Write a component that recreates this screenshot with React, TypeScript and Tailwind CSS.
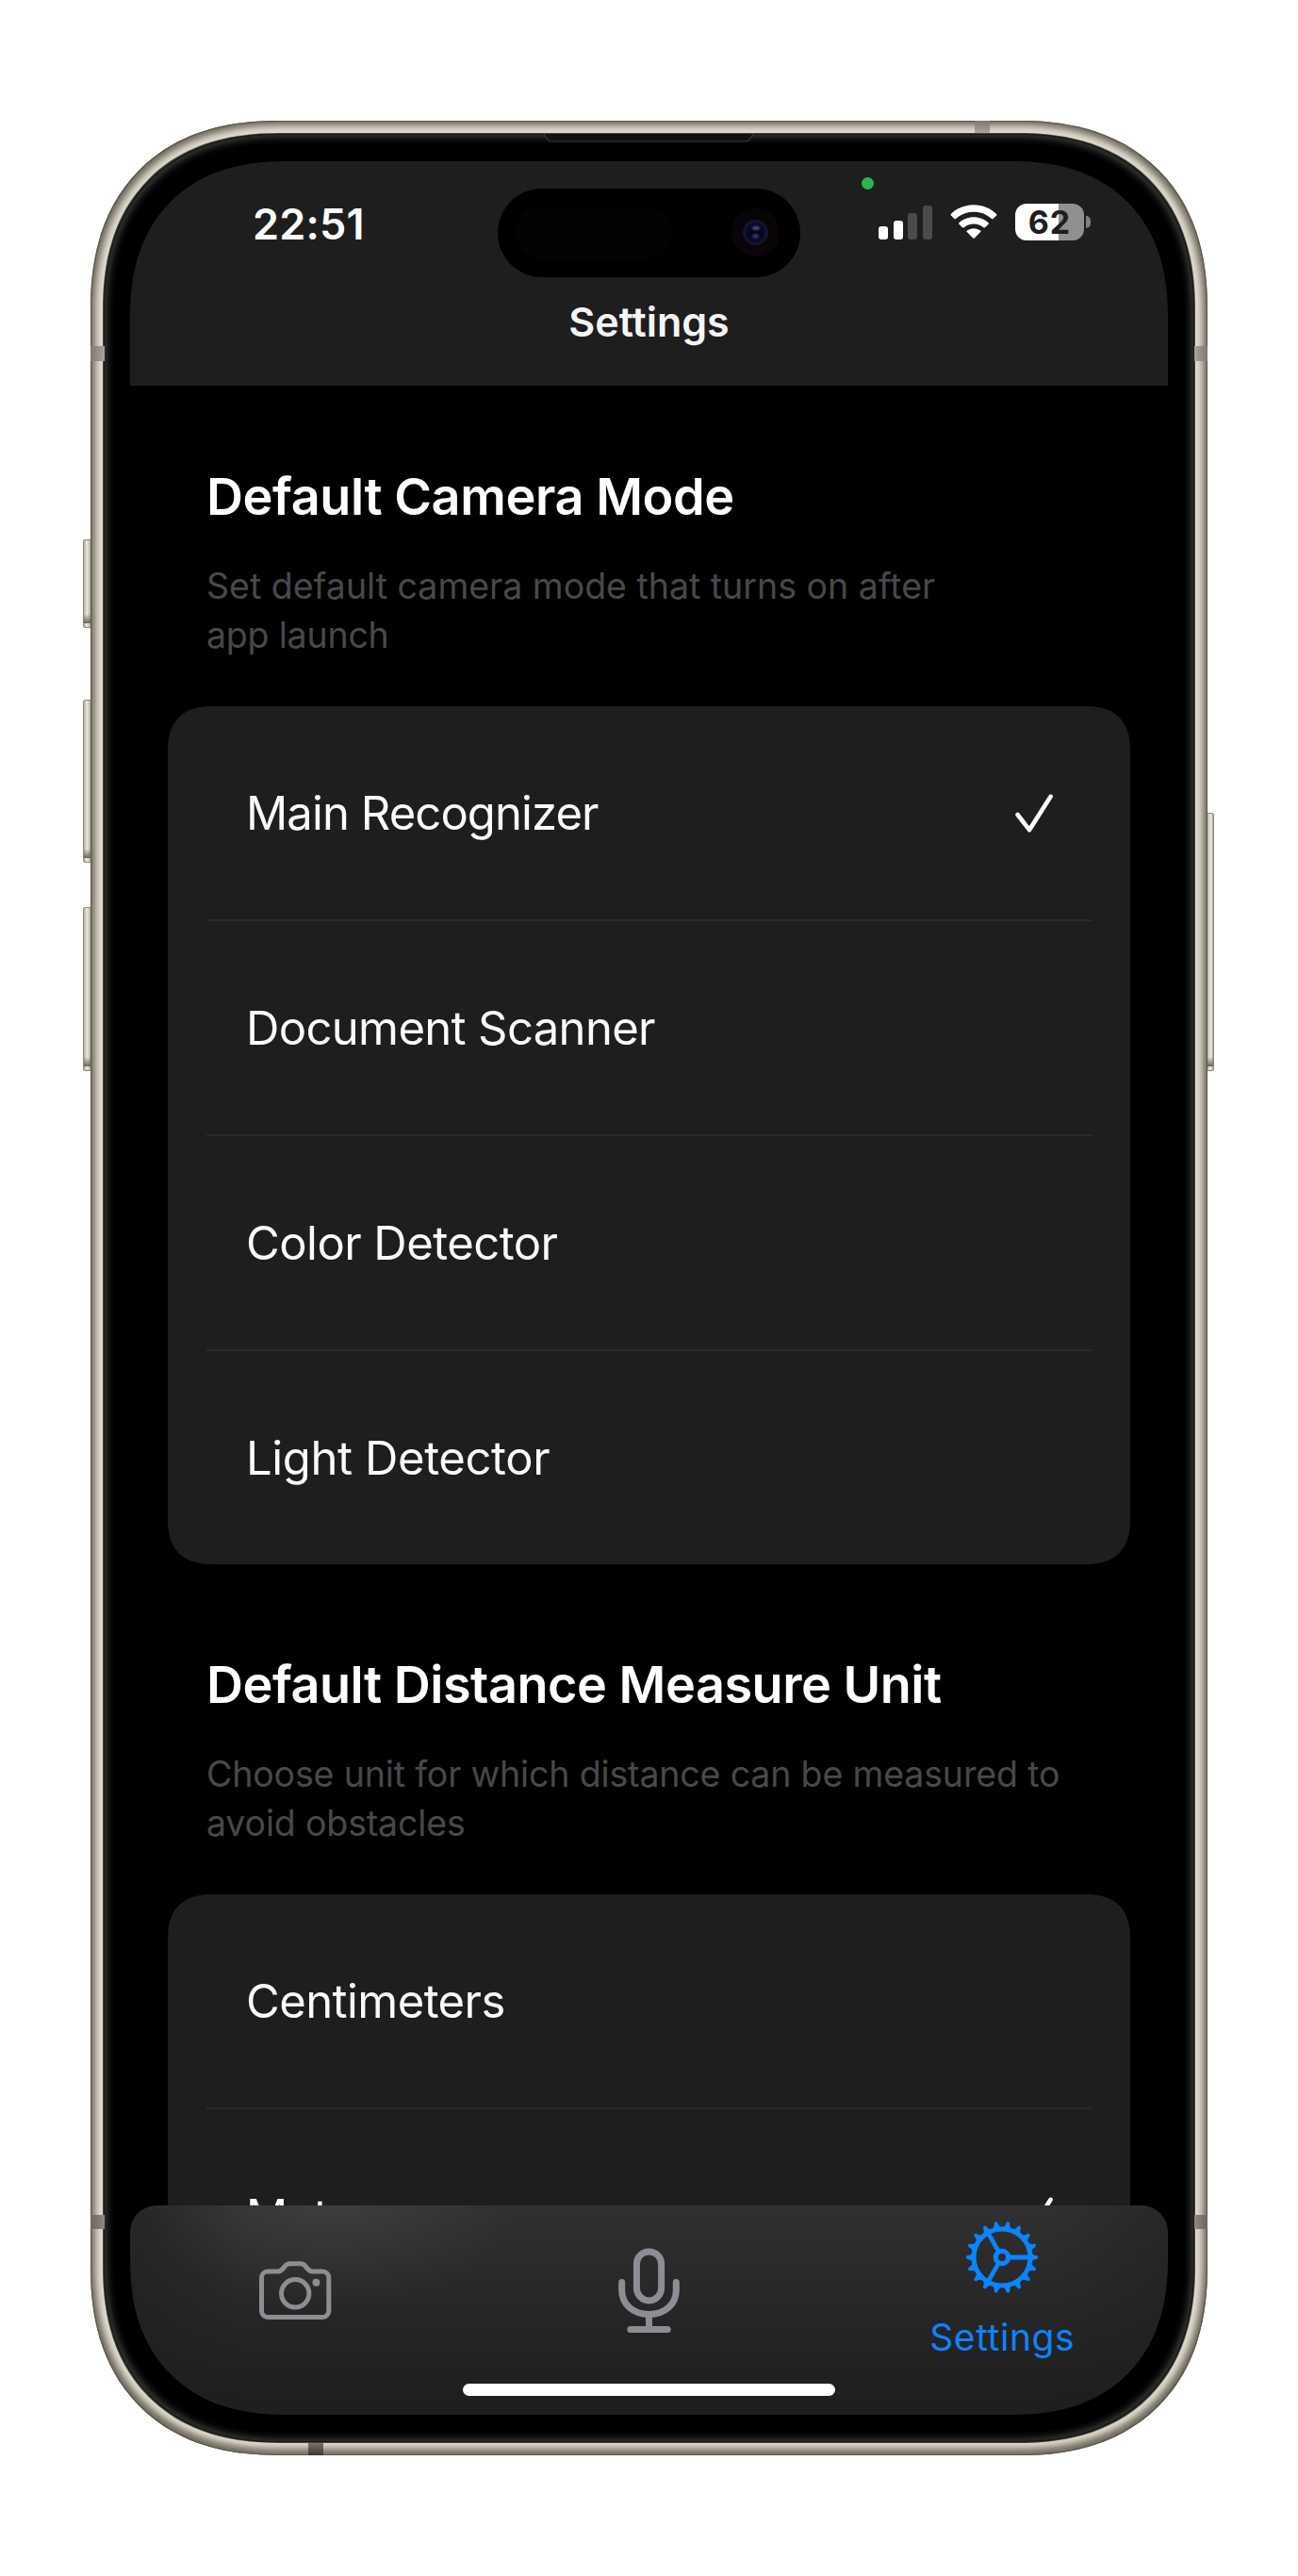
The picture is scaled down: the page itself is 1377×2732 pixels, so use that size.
const TITLE = "text-[54px] leading-[66px] font-semibold text-white whitespace-nowrap";

type Option = { label: string; tracking: string; selected?: boolean };

function Check() {
  return (
    <svg width="40" height="42" viewBox="0 0 40 42" fill="none" stroke="#fff" strokeWidth="4.600" strokeLinecap="round" strokeLinejoin="round">
      <path d="M2.6 22 L15 38.2 L37.6 2.8" />
    </svg>
  );
}

function OptionCard({ options }: { options: Option[] }) {
  return (
    <ul className="mx-10 rounded-[48px] bg-[#1e1e1e] px-[41px] [corner-shape:superellipse(1.3)]">
      {options.map((o, i) => (
        <li
          key={o.label}
          className={
            "flex items-center justify-between pt-[1px] pr-[41px] pl-[42px] " +
            (i === 0 ? "h-[226px]" : "h-[228px] border-t-2 border-[#2b2b2b]")
          }
        >
          <span className={"text-[49px] leading-[60px] whitespace-nowrap text-[#fbfbfb] " + o.tracking}>{o.label}</span>
          {o.selected && <Check />}
        </li>
      ))}
    </ul>
  );
}

function Signal() {
  return (
    <div className="flex h-[38px] items-end gap-[5.7px]">
      <i className="h-[14px] w-[10px] rounded-[3px] bg-white" />
      <i className="h-[20.5px] w-[10px] rounded-[3px] bg-white" />
      <i className="h-[28px] w-[10px] rounded-[3px] bg-[#4b4b4b]" />
      <i className="h-[36px] w-[10px] rounded-[3px] bg-[#4b4b4b]" />
    </div>
  );
}

function Wifi() {
  return (
    <svg width="50" height="38" viewBox="0 0 50 38" className="ml-[18.500px]" fill="#fff">
      <path d="M25 1.2 C34.5 1.2 43.2 5 49.1 11 Q49.9 11.8 49.1 12.6 L45.6 16.1 Q44.8 16.9 44 16.1 C39 11.2 32.400 8.700 25 8.700 C17.600 8.700 11 11.200 6 16.100 Q5.200 16.900 4.400 16.100 L0.900 12.600 Q0.100 11.800 0.900 11 C6.800 5 15.500 1.200 25 1.200 Z" />
      <path d="M25 14.200 C31.100 14.200 36.600 16.600 40.600 20.200 Q41.400 21 40.600 21.800 L37 25.200 Q36.200 25.900 35.400 25.200 C32.700 22.900 29 21.500 25 21.500 C21 21.500 17.300 22.900 14.600 25.200 Q13.800 25.900 13 25.200 L9.400 21.800 Q8.600 21 9.400 20.200 C13.400 16.600 18.900 14.200 25 14.200 Z" />
      <path d="M25 26.200 C27.700 26.200 30.200 27.100 32.100 28.600 Q33 29.300 32.200 30.100 L25.800 36.400 Q25 37.200 24.200 36.400 L17.800 30.100 Q17 29.300 17.900 28.600 C19.800 27.100 22.300 26.200 25 26.200 Z" />
    </svg>
  );
}

function Battery() {
  return (
    <div className="ml-[19px] flex items-center gap-[2.500px]">
      <div className="flex h-[39px] w-[73px] items-center justify-center rounded-[12px] bg-[linear-gradient(90deg,#fff_62.500%,#909090_62.500%)] pl-[1px] text-[34px] leading-[39px] font-bold tracking-[1px] text-[#1e1e1e]">
        62
      </div>
      <i className="h-[13px] w-[5px] rounded-r-full bg-[#7f7f7f]" />
    </div>
  );
}

function Island() {
  return (
    <div className="absolute top-[28.500px] left-[390px] flex h-[94.500px] w-[321px] items-center justify-between rounded-full bg-black pr-[22px] pl-[19px]">
      <div className="h-[57px] w-[166px] rounded-full bg-[#030303]" />
      <div className="flex size-[51px] items-center justify-center rounded-full bg-[linear-gradient(180deg,#050506,#0c040c)]">
        <div className="flex size-[27px] flex-col items-center justify-center gap-[4px] rounded-full border-[3px] border-[#14152b] bg-[radial-gradient(circle,#04040f_30%,#0a0a3a_75%)]">
          <i className="h-[4px] w-[8px] rounded-full bg-[#4a4a8c] blur-[1px]" />
          <i className="h-[5px] w-[7px] rounded-full bg-[linear-gradient(180deg,#0c4f5c,#5c1a6c)] blur-[1px]" />
        </div>
      </div>
    </div>
  );
}

function CameraIcon() {
  return (
    <svg width="77" height="63" viewBox="0 0 77 63" fill="none" stroke="#8e8d93" strokeWidth="5">
      <path d="M9 11 H20 C23 11 24 9.500 25.500 7.600 L27 5.700 C28.600 3.600 29.700 2.800 32.500 2.800 H43.800 C46.600 2.800 47.700 3.600 49.300 5.700 L50.800 7.600 C52.300 9.500 53.300 11 56.300 11 H67.300 A6.500 6.500 0 0 1 73.800 17.500 V53 A6.500 6.500 0 0 1 67.300 59.500 H9 A6.500 6.500 0 0 1 2.500 53 V17.500 A6.500 6.500 0 0 1 9 11 Z" />
      <circle cx="38.200" cy="34.300" r="14.700" />
      <circle cx="60.400" cy="22.700" r="4" fill="#8e8d93" stroke="none" />
    </svg>
  );
}

function MicIcon() {
  return (
    <svg width="65" height="91" viewBox="0 0 65 91" fill="none" stroke="#8e8d93" strokeWidth="7" strokeLinecap="round">
      <rect x="19.400" y="3.900" width="26.200" height="52" rx="13.100" />
      <path d="M3.700 36.500 V45 C3.700 60 16 70.500 32.500 70.500 C49 70.500 61.300 60 61.300 45 V36.500" />
      <path d="M32.500 70.500 V86.500 M12.800 86.600 H52.200" />
    </svg>
  );
}

const TEETH = Array.from({ length: 18 }, (_, i) => i * 20);

function GearIcon() {
  return (
    <svg width="78" height="78" viewBox="-39 -39 78 78" fill="none" stroke="#0b84ff" strokeWidth="5">
      <circle r="30" />
      <circle r="6.700" strokeWidth="5.200" />
      {[0, 120, 240].map((a) => (
        <path key={a} d="M8.500 0 H29" strokeWidth="4.800" transform={`rotate(${a})`} />
      ))}
      {TEETH.map((a) => (
        <path key={a} d="M31 -4.600 C33 -3 35 -2 36.800 -1.900 Q38.200 -1.500 38.200 0 Q38.200 1.500 36.800 1.900 C35 2 33 3 31 4.600 Z" fill="#0b84ff" stroke="none" transform={`rotate(${a})`} />
      ))}
    </svg>
  );
}

const LEFT_KEY =
  "absolute -left-[8px] w-[10px] rounded-l-[3px] border border-r-0 border-[#8d887c] bg-[linear-gradient(90deg,#b3aea2,#ece7dc_35%,#cfc9bc_60%,#8a8578)]";

function KeyFoot() {
  return <i className="absolute inset-x-0 bottom-[4px] h-[10px] bg-[linear-gradient(180deg,transparent,#6b665a)]" />;
}

function Hardware() {
  return (
    <>
      <div className={LEFT_KEY + " top-[444px] h-[94px]"}><KeyFoot /></div>
      <div className={LEFT_KEY + " top-[614px] h-[173px]"}><KeyFoot /></div>
      <div className={LEFT_KEY + " top-[834px] h-[174px]"}><KeyFoot /></div>
      <div className="absolute top-[734px] -right-[7px] h-[274px] w-[9px] rounded-r-[3px] border border-l-0 border-[#8d887c] bg-[linear-gradient(90deg,#8a8578,#dcd6ca_45%,#ece7dc_75%,#a39e92)]"><KeyFoot /></div>
    </>
  );
}

function AntennaBands() {
  return (
    <>
      <i className="absolute top-[239px] left-0 h-[16px] w-[15px] bg-[linear-gradient(90deg,#7d7772,#aaa49e)]" />
      <i className="absolute top-[239px] right-0 h-[16px] w-[14px] bg-[linear-gradient(270deg,#7d7772,#aaa49e)]" />
      <i className="absolute top-[2221px] left-0 h-[15px] w-[15px] bg-[linear-gradient(90deg,#6b655f,#8f8982)]" />
      <i className="absolute top-[2221px] right-0 h-[15px] w-[14px] bg-[linear-gradient(270deg,#6b655f,#8f8982)]" />
      <i className="absolute top-0 left-[938px] h-[13px] w-[16px] bg-[linear-gradient(180deg,#7d7772,#aaa49e)]" />
      <i className="absolute bottom-0 left-[231px] h-[13px] w-[16px] bg-[linear-gradient(0deg,#3d372f,#77716a)]" />
    </>
  );
}

function Earpiece() {
  return (
    <svg className="absolute top-[14px] left-[481px]" width="223" height="10" viewBox="0 0 223 10">
      <path d="M0 0 L4 6 Q5 8 7.500 8 H214.500 Q217 8 218 6 L222 0 Z" fill="#111" />
      <path d="M0 0 L4 6 Q5 8 7.500 8 H214.500 Q217 8 218 6 L222 0" fill="none" stroke="#383838" strokeWidth="1.200" />
    </svg>
  );
}

export default function App() {
  return (
    <div className="h-[2732px] w-[1377px] overflow-hidden bg-white pt-[128px] pl-[96px] font-[Inter,sans-serif]">
      <div className="relative h-[2476px] w-[1185px]">
        <Hardware />
        <div className="relative h-full rounded-[200px] bg-[#e0dbce] p-[14px] shadow-[inset_0_0_1px_1px_#5b564b,inset_0_0_7px_5px_#716c60,inset_0_-10px_6px_-2px_rgba(110,104,88,0.45)] [corner-shape:superellipse(1.2)]">
          <AntennaBands />
          <div className="h-full rounded-[187px] bg-black px-[28px] pt-[29px] pb-[29px] shadow-[0_0_0_1px_#4a463e,inset_0_0_1px_1px_#151515,inset_0_0_9px_3px_#454547] [corner-shape:superellipse(1.2)]">
            <div className="flex h-[2390px] w-[1101px] flex-col overflow-hidden rounded-[165px] bg-black [corner-shape:superellipse(1.2)]">
              <header className="relative h-[238px] shrink-0 bg-[#1e1e1e] pt-[45px]">
                <Island />
                <i className="absolute top-[17px] left-[776px] size-[12.500px] rounded-full bg-[#2fb350]" />
                <div className="flex h-[42px] justify-between pr-[82px] pl-[130px]">
                  <span className="pt-[1px] text-[45px] leading-[42px] font-semibold tracking-[0.200px] text-white">22:51</span>
                  <div className="flex h-[39px]">
                    <Signal />
                    <Wifi />
                    <Battery />
                  </div>
                </div>
                <h1 className="mt-[57px] text-center text-[43px] leading-[52px] font-semibold text-[#f5f5f5]">Settings</h1>
              </header>

              <main className="min-h-0 flex-1 overflow-hidden pt-[85px]">
                <section>
                  <h2 className={TITLE + " ml-[81px] tracking-[-0.420px]"}>Default Camera Mode</h2>
                  <p className="mt-[36px] mb-[49.600px] ml-[81px] text-[37.500px] leading-[51.700px] whitespace-nowrap text-[#48484a]">
                    Set default camera mode that turns on after
                    <br />
                    <span className="tracking-[-0.200px]">app launch</span>
                  </p>
                  <OptionCard
                    options={[
                      { label: "Main Recognizer", tracking: "tracking-[-0.920px]", selected: true },
                      { label: "Document Scanner", tracking: "tracking-[-0.650px]" },
                      { label: "Color Detector", tracking: "tracking-[-0.550px]" },
                      { label: "Light Detector", tracking: "tracking-[-0.400px]" },
                    ]}
                  />
                </section>
                <section className="mt-[95px]">
                  <h2 className={TITLE + " ml-[81px] tracking-[-0.480px]"}>Default Distance Measure Unit</h2>
                  <p className="mt-[36px] mb-[49.600px] ml-[81px] text-[37.500px] leading-[51.700px] tracking-[-0.150px] whitespace-nowrap text-[#48484a]">
                    Choose unit for which distance can be measured to
                    <br />
                    avoid obstacles
                  </p>
                  <OptionCard
                    options={[
                      { label: "Centimeters", tracking: "tracking-[-0.580px]" },
                      { label: "Meters", tracking: "tracking-[-0.530px]", selected: true },
                    ]}
                  />
                </section>
              </main>

              <nav className="relative flex h-[222px] shrink-0 rounded-t-[28px] bg-[radial-gradient(200px_110px_at_215px_0px,rgba(255,255,255,0.065),transparent),linear-gradient(90deg,rgba(30,30,30,0.550),transparent_120px,transparent_980px,rgba(30,30,30,0.450)),linear-gradient(180deg,#303030,#1f1f1f_90%)]">
                <div className="ml-[137px] pt-[59px]">
                  <CameraIcon />
                </div>
                <div className="ml-[304px] pt-[45px]">
                  <MicIcon />
                </div>
                <div className="ml-[263px] flex w-[157px] flex-col items-center pt-[16px]">
                  <GearIcon />
                  <span className="mt-[22px] pl-[1.500px] text-[39px] leading-[47px] tracking-[0.600px] text-[#0b84ff]">Settings</span>
                </div>
                <i className="absolute bottom-[20.500px] left-[353px] h-[13px] w-[395px] rounded-full bg-white" />
              </nav>
            </div>
          </div>
          <Earpiece />
        </div>
      </div>
    </div>
  );
}
